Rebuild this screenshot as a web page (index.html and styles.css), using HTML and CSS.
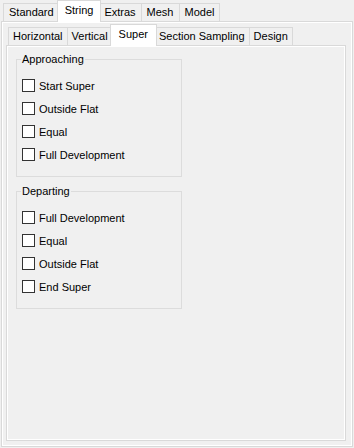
FILE: index.html
```html
<!DOCTYPE html>
<html lang="en">
<head>
    <meta charset="UTF-8">
    <title>String - Super</title>
    <link rel="stylesheet" href="styles.css">
</head>
<body>
    <!-- Outer tab strip -->
    <div class="tabs outer-tabs">
        <div class="tab">Standard</div>
        <div class="tab active">String</div>
        <div class="tab">Extras</div>
        <div class="tab">Mesh</div>
        <div class="tab">Model</div>
    </div>

    <div class="pane outer-pane">
        <div class="page outer-page">
            <!-- Inner tab strip -->
            <div class="tabs inner-tabs">
                <div class="tab">Horizontal</div>
                <div class="tab">Vertical</div>
                <div class="tab active">Super</div>
                <div class="tab">Section Sampling</div>
                <div class="tab">Design</div>
            </div>

            <div class="pane inner-pane">
                <div class="page inner-page">
                    <fieldset class="group">
                        <legend>Approaching</legend>
                        <label class="check"><span class="box"></span>Start Super</label>
                        <label class="check"><span class="box"></span>Outside Flat</label>
                        <label class="check"><span class="box"></span>Equal</label>
                        <label class="check"><span class="box"></span>Full Development</label>
                    </fieldset>

                    <fieldset class="group">
                        <legend>Departing</legend>
                        <label class="check"><span class="box"></span>Full Development</label>
                        <label class="check"><span class="box"></span>Equal</label>
                        <label class="check"><span class="box"></span>Outside Flat</label>
                        <label class="check"><span class="box"></span>End Super</label>
                    </fieldset>
                </div>
            </div>
        </div>
    </div>
</body>
</html>
```

FILE: styles.css
```css
* {
    margin: 0;
    padding: 0;
    box-sizing: border-box;
}

html, body {
    height: 100%;
}

body {
    background-color: #f0f0f0;
    color: #000000;
    font-family: "Liberation Sans", Arial, sans-serif;
    font-size: 11px;
    display: flex;
    flex-direction: column;
    padding: 0 1px 1px 1px;
}

/* Tab strips */
.tabs {
    display: flex;
    align-items: flex-end;
    flex-shrink: 0;
}

.outer-tabs {
    height: 21px;
    padding-left: 2px;
}

.inner-tabs {
    height: 20px;
    padding-left: 2px;
}

.tab {
    height: 18px;
    line-height: 16px;
    padding: 0 5px;
    margin-right: -1px;
    border: 1px solid #d9d9d9;
    border-bottom: none;
    background-color: #f0f0f0;
    white-space: nowrap;
}

.tab.active {
    height: 22px;
    line-height: 18px;
    padding: 0 7px;
    margin: 0 -3px -1px -2px;
    background-color: #ffffff;
    position: relative;
    z-index: 1;
}

.inner-tabs .tab {
    padding: 0 4px;
}

.inner-tabs .tab.active {
    padding: 0 8px;
}

/* Panes */
.pane {
    flex: 1;
    display: flex;
    border: 1px solid #d9d9d9;
    background-color: #ffffff;
    padding: 1px;
}

.page {
    flex: 1;
    display: flex;
    flex-direction: column;
    background-color: #f0f0f0;
}

.outer-page {
    padding: 2px 5px 4px 3px;
}

.inner-page {
    padding: 6px 8px;
}

/* Group boxes */
.group {
    width: 166px;
    border: 1px solid #dcdcdc;
    padding: 8px 5px 10px 5px;
    margin-bottom: 8px;
}

.group legend {
    padding: 0 1px;
    margin-left: -1px;
    line-height: 13px;
}

.check {
    display: flex;
    align-items: center;
    height: 23px;
    gap: 4px;
}

.box {
    width: 13px;
    height: 13px;
    border: 1px solid #333333;
    background-color: #ffffff;
}
```
